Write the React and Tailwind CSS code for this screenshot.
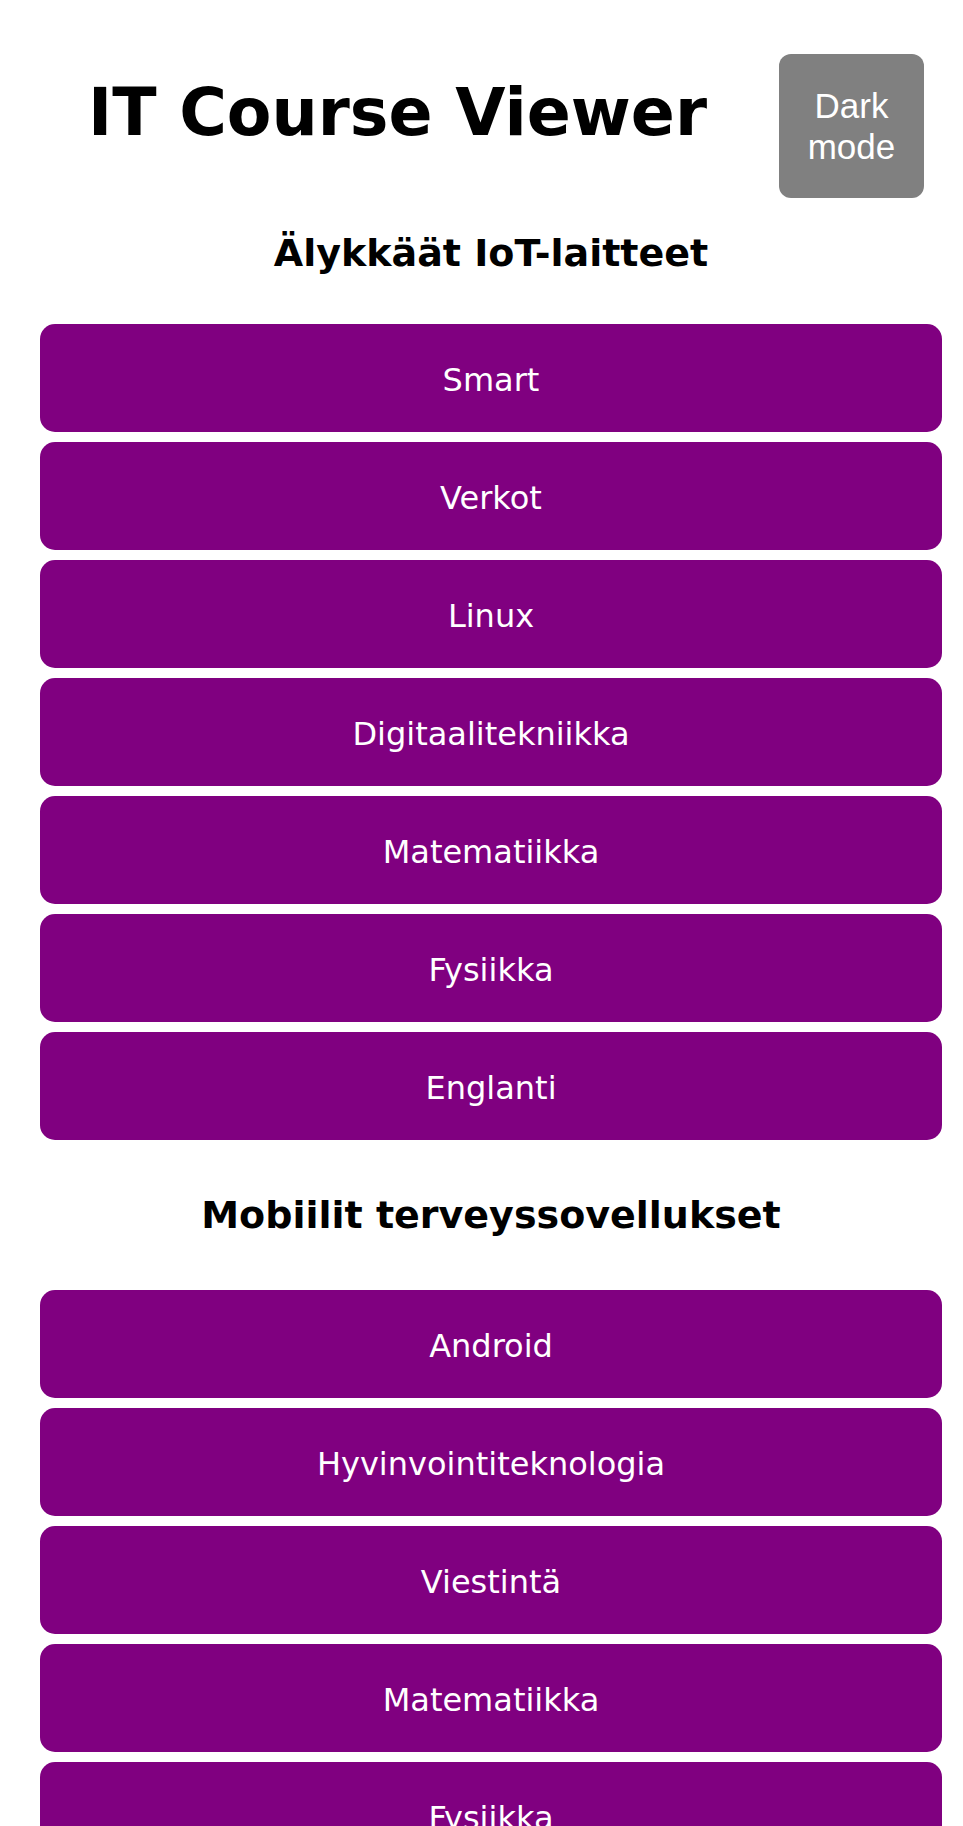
const courses = [
    {
        name: "Älykkäät IoT-laitteet",
        spacing: "mt-[33px] mb-[49px]",
        subjects: ["Smart", "Verkot", "Linux", "Digitaalitekniikka", "Matematiikka", "Fysiikka", "Englanti"],
    },
    {
        name: "Mobiilit terveyssovellukset",
        spacing: "mt-[53px] mb-[53px]",
        subjects: ["Android", "Hyvinvointiteknologia", "Viestintä", "Matematiikka", "Fysiikka", "Englanti"],
    },
];

function CourseSection({ course }) {
    return (
        <section>
            <h2 className={`${course.spacing} text-center text-[38px] leading-[44px] font-bold text-black`}>
                {course.name}
            </h2>
            <div className="flex flex-col gap-[10px]">
                {course.subjects.map((subject, i) => (
                    <button
                        key={i}
                        className="flex h-[108px] w-full items-center justify-center rounded-[15px] bg-[#800080] pt-[5px] text-[32px] leading-[37px] text-white"
                    >
                        {subject}
                    </button>
                ))}
            </div>
        </section>
    );
}

export default function App() {
    return (
        <div className="min-h-screen bg-white font-['DejaVu_Sans',Verdana,sans-serif] text-black">
            <header className="flex items-start justify-between pt-[54px] pl-[88px] pr-[39px]">
                <h1 className="mt-[21px] text-[65px] leading-[75px] font-bold">IT Course Viewer</h1>
                <button className="flex h-[144px] w-[145px] items-center justify-center rounded-[12px] bg-[#808080] font-['Liberation_Sans',Arial,sans-serif] text-[35px] leading-[41px] text-white">
                    Dark
                    <br />
                    mode
                </button>
            </header>
            <main className="pl-[40px] pr-[21px] pb-[40px]">
                {courses.map((course) => (
                    <CourseSection key={course.name} course={course} />
                ))}
            </main>
        </div>
    );
}
